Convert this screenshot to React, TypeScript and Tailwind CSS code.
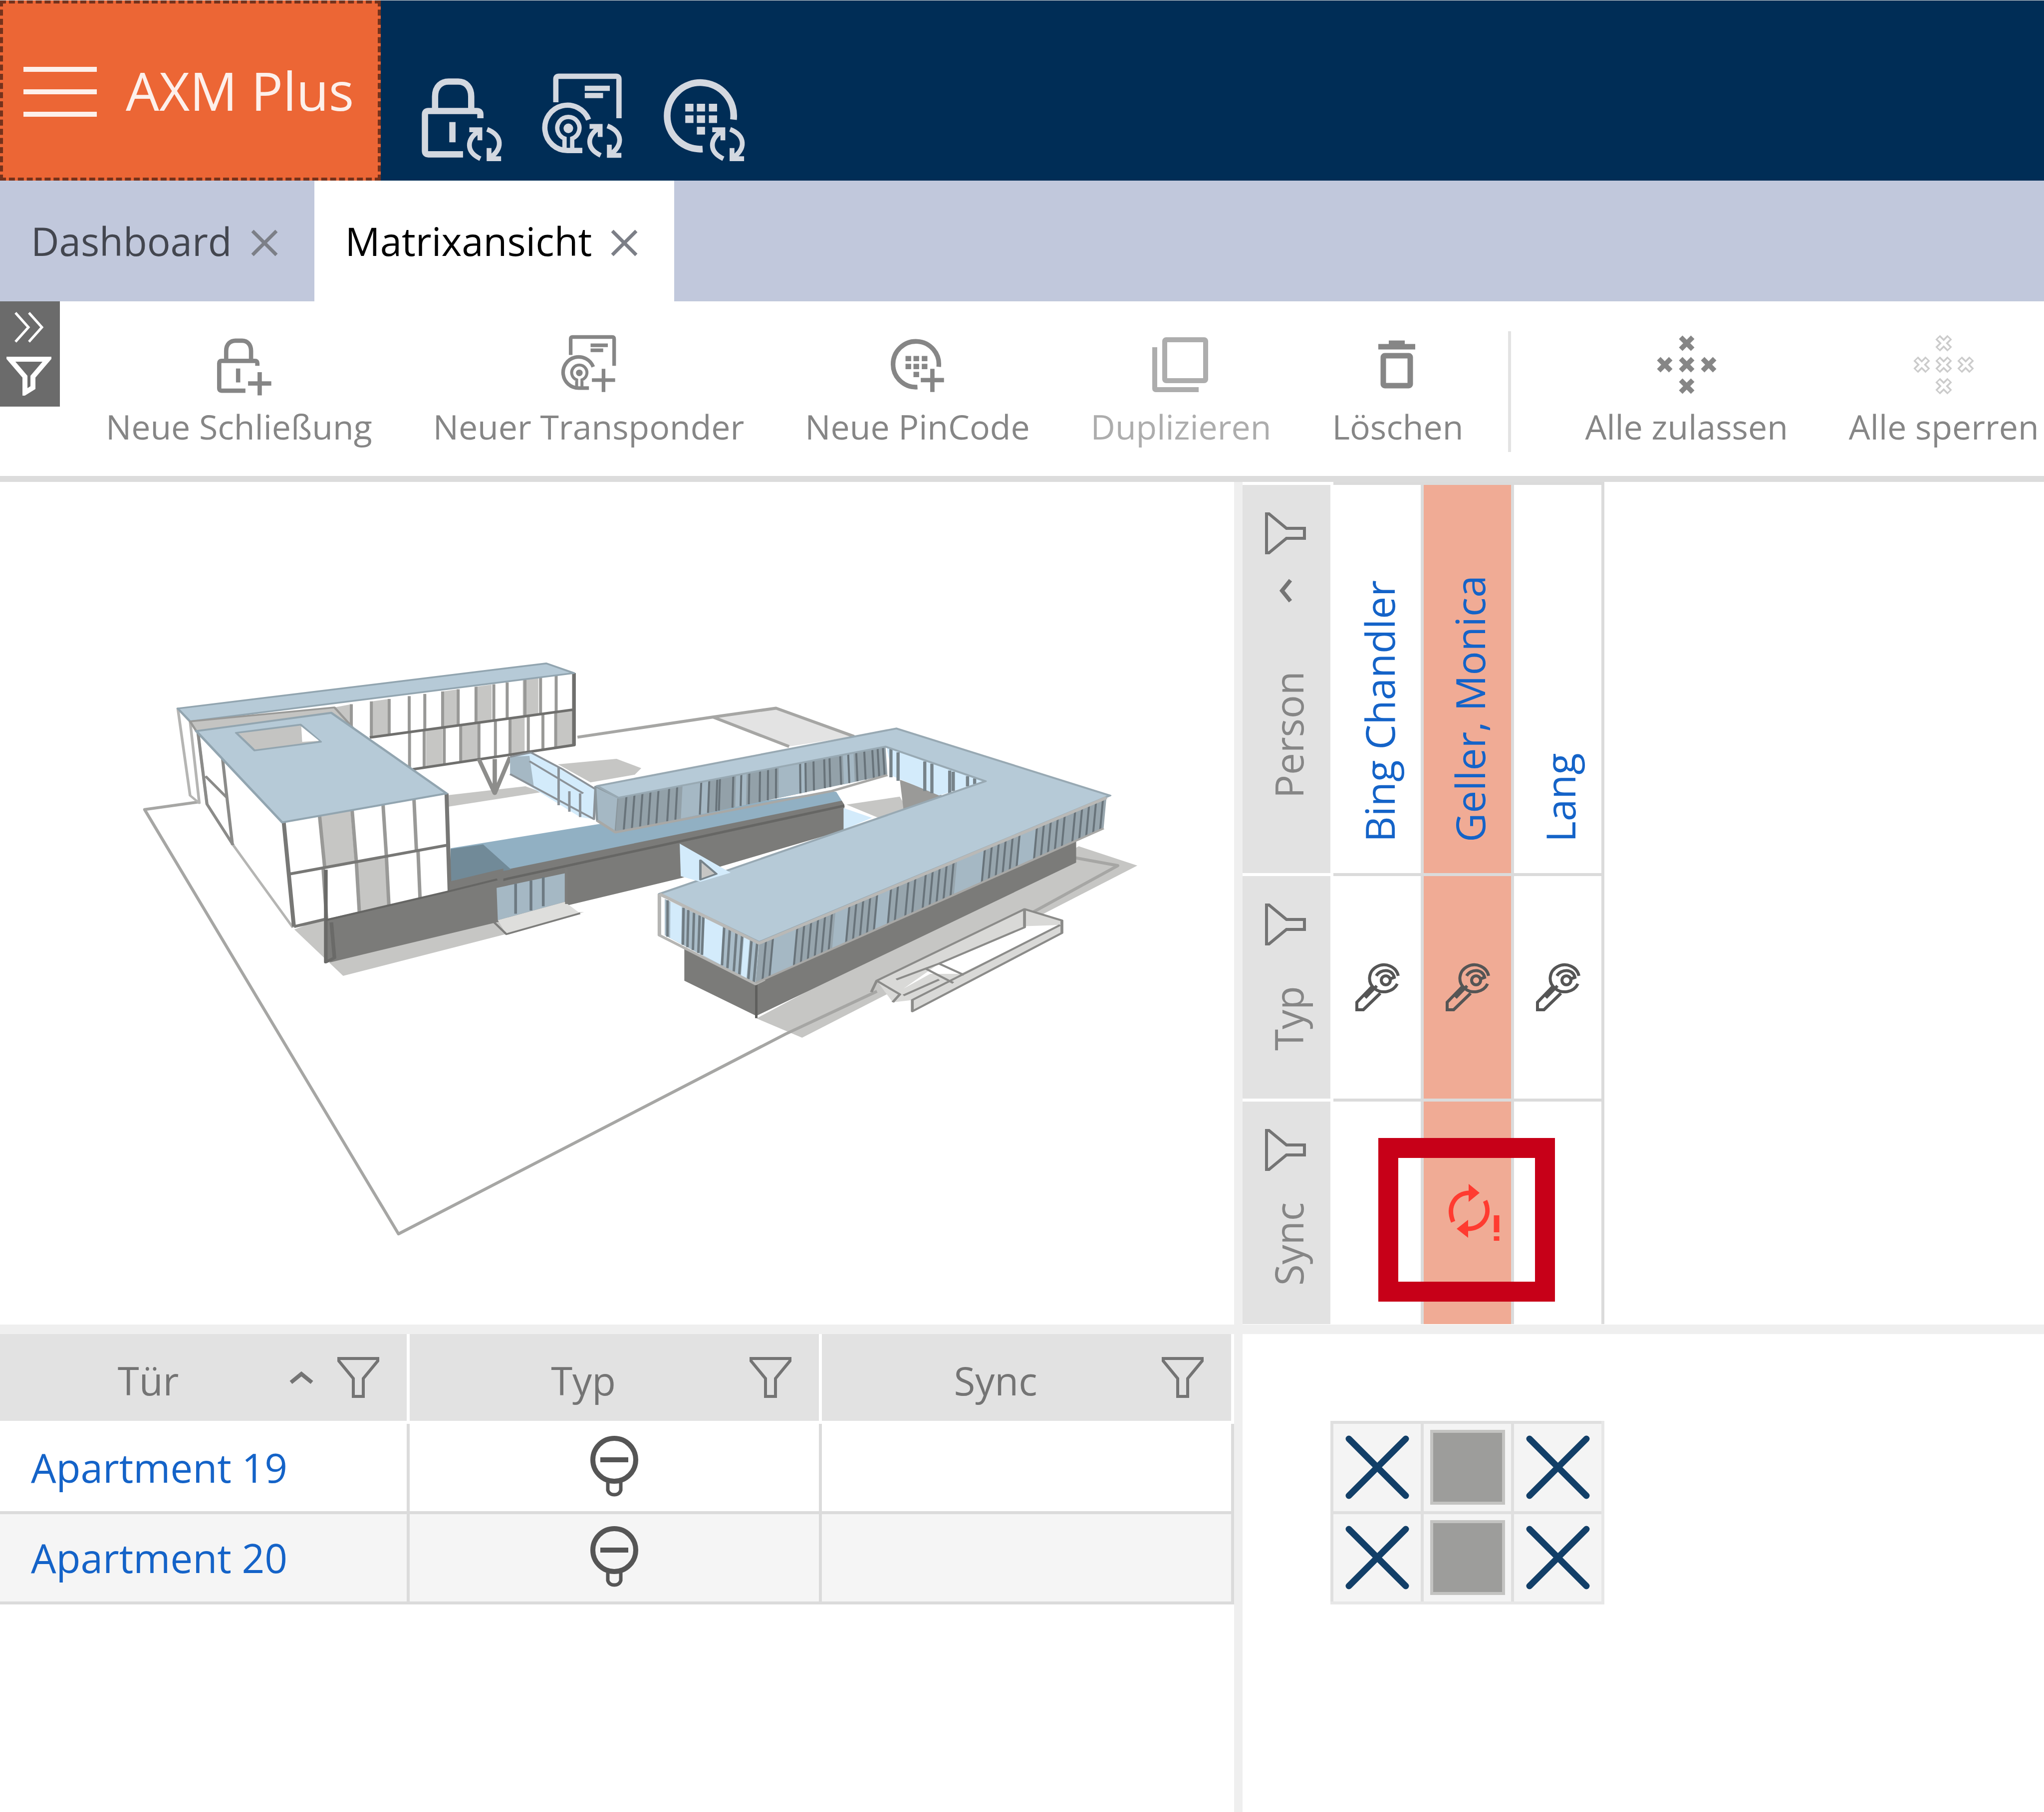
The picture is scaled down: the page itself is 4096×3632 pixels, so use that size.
import React, { useState } from 'react';
import clsx from 'clsx';

type IconProps = { className?: string };

const SmallSync: React.FC<{ transform?: string }> = ({ transform }) => (
    <g transform={transform} strokeWidth="10">
        <path d="M105 119h22v22M126 121c-28 18-28 44 2 58" />
        <path d="M142 118c32 12 34 42 4 60M146 157v22h25" />
    </g>
);

const SmallPlus: React.FC<{ transform?: string }> = ({ transform }) => (
    <path transform={transform} d="M98 138h70M133 104v70" />
);

const LockIcon: React.FC<IconProps & { badge: 'sync' | 'plus' }> = ({ className, badge }) => (
    <svg
        viewBox={badge === 'sync' ? '0 0 176 186' : '-16 0 176 186'}
        overflow="visible"
        fill="none"
        stroke="currentColor"
        strokeWidth="13"
        className={className}
    >
        <path d="M34 78V50C34 28 48 19 62 19h20c16 0 27 12 27 31v28" />
        <path d="M128 95v-8q0-7-7-7H20q-7 0-7 7v76q0 7 7 7h72" />
        <path d="M70 103v42" />
        {badge === 'sync' ? <SmallSync /> : <SmallPlus transform="translate(2 10)" />}
    </svg>
);

const TransponderIcon: React.FC<IconProps & { badge: 'sync' | 'plus' }> = ({ className, badge }) => (
    <svg viewBox="0 0 176 186" fill="none" stroke="currentColor" strokeWidth="11" className={className}>
        <path d="M34 62V14q0-6 6-6h119q6 0 6 6v81" />
        <path d="M94 33h52M94 48h38" />
        <path d="M102 98A47 47 0 1 0 58 162H89" />
        <path d="M52 158v-21a23 23 0 1 1 16 0v21" strokeWidth="9" />
        <circle cx="60" cy="116" r="10" fill="currentColor" stroke="none" />
        {badge === 'sync' ? <SmallSync transform="translate(-1 -7)" /> : <SmallPlus />}
    </svg>
);

const PinCodeIcon: React.FC<IconProps & { badge: 'sync' | 'plus' }> = ({ className, badge }) => (
    <svg viewBox="0 0 176 186" fill="none" stroke="currentColor" strokeWidth="14" className={className}>
        <path d="M152 98A69 69 0 1 0 88 159" />
        <path d="M52 73h17M76 73h17M101 73h17M52 97h17M76 97h17M101 97h17M76 121h17" strokeWidth="16" />
        {badge === 'sync' ? (
            <SmallSync transform="translate(3 0)" />
        ) : (
            <g strokeWidth="13">
                <SmallPlus />
            </g>
        )}
    </svg>
);

const DuplicateIcon: React.FC<IconProps> = ({ className }) => (
    <svg viewBox="0 0 117 124" fill="none" stroke="currentColor" strokeWidth="10" className={className}>
        <rect x="26" y="11" width="82" height="82" rx="3" />
        <path d="M6 26v83q0 2 2 2h86" />
    </svg>
);

const TrashIcon: React.FC<IconProps> = ({ className }) => (
    <svg viewBox="0 0 117 124" fill="none" stroke="currentColor" strokeWidth="11" className={className}>
        <path d="M20 25h74M41 18h32" />
        <rect x="30" y="43" width="54" height="60" rx="3" />
    </svg>
);

const CROSSES: [number, number][] = [
    [66, 18],
    [22, 61],
    [66, 61],
    [110, 61],
    [66, 104],
];

const CrossesIcon: React.FC<IconProps & { hollow?: boolean }> = ({ className, hollow }) => (
    <svg viewBox="0 0 132 124" fill="none" stroke="currentColor" className={className}>
        {CROSSES.map(([x, y]) => (
            <g key={`${x}-${y}`}>
                <path d={`M${x - 12} ${y - 12}l24 24M${x + 12} ${y - 12}l-24 24`} strokeWidth={hollow ? 13 : 10} />
                {hollow && (
                    <path
                        d={`M${x - 10} ${y - 10}l20 20M${x + 10} ${y - 10}l-20 20`}
                        stroke="#fff"
                        strokeWidth="6"
                    />
                )}
            </g>
        ))}
    </svg>
);

const FunnelIcon: React.FC<IconProps> = ({ className }) => (
    <svg viewBox="0 0 86 86" fill="none" stroke="currentColor" strokeWidth="6" className={className}>
        <path d="M4 5h78v5L53 45v36H33V45L4 10z" />
    </svg>
);

const CaretIcon: React.FC<IconProps> = ({ className }) => (
    <svg viewBox="0 0 52 28" fill="none" stroke="currentColor" strokeWidth="8" className={className}>
        <path d="M5 24L26 7l21 17" />
    </svg>
);

const CloseIcon: React.FC<IconProps> = ({ className }) => (
    <svg viewBox="0 0 60 60" fill="none" stroke="currentColor" strokeWidth="7" className={className}>
        <path d="M6 6l48 48M54 6L6 54" />
    </svg>
);

const KeyIcon: React.FC<IconProps> = ({ className }) => (
    <svg viewBox="0 0 96 98" fill="none" stroke="currentColor" strokeWidth="6" className={className}>
        <path d="M90 26A29 27 0 1 0 88 42" />
        <path d="M46 26C54 12 78 11 82 29l-8 3" />
        <circle cx="65" cy="35" r="9" />
        <path d="M38 47L7 79v15h13l34-33M47 46L24 70" />
    </svg>
);

const CylinderIcon: React.FC<IconProps> = ({ className }) => (
    <svg viewBox="0 0 98 128" fill="none" stroke="currentColor" strokeWidth="10" className={className}>
        <circle cx="49" cy="49" r="43" />
        <path d="M21 49h56" strokeWidth="10" />
        <path d="M36 90v20q3 9 13 9t13-9V90" strokeWidth="7" />
    </svg>
);

const SyncAlertIcon: React.FC<IconProps> = ({ className }) => (
    <svg viewBox="-24 0 128 120" fill="none" stroke="currentColor" strokeWidth="9" className={className}>
        <path d="M11 78C-2 46 16 20 44 20M75 36c14 30-6 56-34 56" />
        <path d="M42 2v36l22-18zM41 74v36L18 92z" fill="currentColor" stroke="none" />
        <path d="M98 65v34M98 107v9" strokeWidth="11" />
    </svg>
);

// points along an edge between two vertices
const lerp = (a: number, b: number, t: number) => a + (b - a) * t;

type FacadeProps = {
    top: [number, number, number, number];
    bottom: [number, number, number, number];
    panes?: [number, number][];
    bars?: number[];
    paneFill?: string;
    stroke?: string;
    width?: number;
};

// draws window panes and mullions on a skewed wall; positions run from 0 to 1 along the wall
const Facade: React.FC<FacadeProps> = ({ top, bottom, panes = [], bars = [], paneFill, stroke, width = 5 }) => {
    const p = (e: number[], t: number) => `${lerp(e[0], e[2], t)} ${lerp(e[1], e[3], t)}`;
    return (
        <>
            {panes.map(([a, b]) => (
                <path key={a} d={`M${p(top, a)}L${p(top, b)}L${p(bottom, b)}L${p(bottom, a)}z`} fill={paneFill} />
            ))}
            {bars.map((t) => (
                <path
                    key={t}
                    d={`M${p(top, t)}L${p(bottom, t)}`}
                    stroke={stroke}
                    strokeWidth={width}
                    vectorEffect="non-scaling-stroke"
                />
            ))}
        </>
    );
};

const wingBars = [
    0.03, 0.06, 0.09, 0.12, 0.15, 0.19, 0.22, 0.31, 0.34, 0.37, 0.38, 0.43, 0.46, 0.49, 0.53, 0.56, 0.59, 0.68, 0.7,
    0.73, 0.77, 0.79, 0.83, 0.86, 0.89, 0.92, 0.95, 0.97, 0.99,
];
const frontBars = [
    0.02, 0.04, 0.11, 0.13, 0.15, 0.17, 0.19, 0.21, 0.26, 0.28, 0.3, 0.32, 0.34, 0.38, 0.4, 0.43, 0.45, 0.48, 0.5,
    0.52, 0.54, 0.56, 0.65, 0.67, 0.69, 0.71, 0.73, 0.75, 0.8, 0.82, 0.84, 0.86, 0.88, 0.91, 0.93, 0.95, 0.97, 0.99,
];

const SitePlan: React.FC<IconProps> = ({ className }) => (
    <svg viewBox="0 1001 2563 1750" fill="none" strokeLinejoin="round" className={className}>
        <g transform="translate(280 1340) scale(1.352 .8036)">
            <path d="M320 855L245 735L300 700L560 700L690 690L575 745z" fill="#c6c6c4" />
            <path d="M480 418V388L600 365L625 380z" fill="#c6c6c4" />
            <path d="M650 308L740 294L778 318L768 335L700 355z" fill="#c6c6c4" />
            <path d="M955 965L1450 520L1540 570L1025 1015z" fill="#c6c6c4" />
            <path d="M888 186L985 163L1105 236L1005 262z" fill="#e3e3e3" />
            <g stroke="#a6a6a4" strokeWidth="6">
                <path
                    d="M100 405L15 425L405 1522L1000 1005L1140 895M1380 690L1510 570L1445 550"
                    vectorEffect="non-scaling-stroke"
                />
                <path d="M680 238L888 186L985 163L1105 236M888 186L1005 262" vectorEffect="non-scaling-stroke" />
            </g>
            {/* flat building between the two wings */}
            <path d="M295 700L485 608L1090 393V478L840 602L300 820z" fill="#7b7b79" />
            <path d="M485 525L740 455L1070 378L1092 382V400L485 610z" fill="#91b0c3" />
            <path d="M485 527L535 515L578 580L485 610z" fill="#718a98" />
            <path d="M485 640L575 603L1090 415" stroke="#666664" strokeWidth="5" vectorEffect="non-scaling-stroke" />
        </g>

        <g transform="translate(280 1340) scale(.6378 .4464)">
            <path d="M140 295L180 355L210 735L180 700z" fill="#fff" stroke="#b5b5b3" strokeWidth="9" />
            <path d="M650 290L1430 130V465L905 577z" fill="#fff" />
            <path d="M650 290L705 275V390z" fill="#c6c6c4" />
            <Facade
                top={[705, 275, 1430, 130]}
                bottom={[705, 440, 1430, 300]}
                paneFill="#c6c6c4"
                panes={[[0.09, 0.165], [0.41, 0.48], [0.56, 0.63], [0.77, 0.84]]}
                bars={[0, 0.09, 0.17, 0.26, 0.33, 0.41, 0.48, 0.56, 0.64, 0.7, 0.78, 0.85, 0.92]}
                stroke="#999997"
                width={6}
            />
            <Facade
                top={[835, 415, 1430, 300]}
                bottom={[835, 592, 1430, 465]}
                paneFill="#c6c6c4"
                panes={[[0.19, 0.28], [0.38, 0.48], [0.65, 0.73], [0.9, 1]]}
                bars={[0.1, 0.18, 0.29, 0.38, 0.48, 0.57, 0.65, 0.75, 0.83, 0.9]}
                stroke="#999997"
                width={6}
            />
            <path d="M765 430L1430 300M905 578L1430 465V130" stroke="#6f6f6d" strokeWidth="12" />
            <path d="M140 295L1340 85L1430 130L180 355z" fill="#b6cad7" stroke="#92a5b0" strokeWidth="8" />
            <path d="M180 355L650 290L720 400L200 400z" fill="#c4c4c2" stroke="#999997" strokeWidth="8" />
            <path d="M1120 530L1172 690L1222 520M1172 530V690" stroke="#8d8d8b" strokeWidth="14" />

            {/* glass bridge */}
            <path d="M1222 520L1290 500L1500 670L1495 810L1450 800L1222 600z" fill="#d3ebfb" />
            <path d="M1222 520L1285 515L1300 665L1222 600z" fill="#a5b8c4" />
            <path
                d="M1222 520L1290 500L1390 575L1500 670L1495 810L1222 600M1380 570V745M1415 680V775M1450 690V800M1285 540L1460 690"
                stroke="#8b9298"
                strokeWidth="8"
            />

            <path d="M200 400L480 825L518 1315L220 745z" fill="#fff" />
            <path d="M205 400L235 740L320 930L515 1315" stroke="#b5b5b3" strokeWidth="9" />
            <path
                d="M205 400L235 740L320 930M230 610L300 710M285 520L300 710L318 930"
                stroke="#8b8b89"
                strokeWidth="10"
            />
            <path d="M480 825L1015 690L1025 1145L518 1315z" fill="#fff" />
            <Facade
                top={[485, 825, 1015, 690]}
                bottom={[505, 1065, 1020, 930]}
                paneFill="#c6c6c4"
                panes={[[0.22, 0.41]]}
                bars={[0.22, 0.42, 0.61, 0.8]}
                stroke="#999997"
                width={7}
            />
            <Facade
                top={[505, 1065, 1020, 930]}
                bottom={[518, 1310, 1025, 1145]}
                paneFill="#c6c6c4"
                panes={[[0.42, 0.61]]}
                bars={[0.21, 0.42, 0.61, 0.81]}
                stroke="#999997"
                width={7}
            />
            <path
                d="M485 825L518 1310M505 1065L1020 930M1015 690L1025 1145M518 1310L622 1275"
                stroke="#777775"
                strokeWidth="13"
            />
            <path d="M622 1275L1025 1145V1100L1200 1040V1250L650 1455L625 1475z" fill="#7b7b79" />
            <path d="M622 1045V1475L650 1455L640 1290" stroke="#6a6a68" strokeWidth="12" />
            <path d="M622 1280L1025 1145L1180 1090" stroke="#666664" strokeWidth="9" />
            <path d="M200 400L640 315L1015 690L480 825z" fill="#b6cad7" stroke="#92a5b0" strokeWidth="9" />
            <path d="M330 408L540 370L605 450L390 490z" fill="#c4c4c2" stroke="#92a5b0" strokeWidth="8" />
            <path d="M542 378L600 445L545 450z" fill="#fff" />
            <path d="M1178 1130L1400 1062V1195L1182 1280z" fill="#a5b8c4" />
            <path d="M1240 1110V1250M1290 1095V1235M1330 1080V1215" stroke="#6d7a82" strokeWidth="9" />
            <path d="M1182 1280L1400 1195L1450 1248L1210 1345z" fill="#dededc" />
            <path d="M1170 1290L1210 1345L1450 1248M1405 1040V1205" stroke="#7d7d7b" strokeWidth="8" />
        </g>

        <g transform="translate(1240 1440) scale(.7398 .472)">
            <path d="M660 405L830 365L960 450L780 548L698 500z" fill="#fff" />
            <path d="M700 490L850 455L870 510L790 548z" fill="#c6c6c4" />
            <path d="M850 380L970 450L860 510z" fill="#9a9a98" />
            <path d="M692 505L772 548L692 600z" fill="#d3ebfb" />
            <path d="M-5 410L60 460L52 612L0 560z" fill="#a5b8c4" stroke="#8a969c" strokeWidth="6" />
            <path d="M60 460L810 235L815 360L52 612z" fill="#93a1a9" />
            <Facade
                top={[60, 460, 810, 235]}
                bottom={[52, 612, 815, 360]}
                paneFill="#a5b8c4"
                panes={[[0.24, 0.34], [0.6, 0.7], [0.44, 0.48], [0.84, 0.88]]}
                bars={wingBars}
                stroke="#68737a"
                width={4}
            />
            <path d="M0 560L52 612L660 430L815 360" stroke="#a8a8a6" strokeWidth="10" />
            <path d="M812 235L1090 385L960 450L830 365z" fill="#d3ebfb" />
            <path
                d="M825 245V370M845 260V385M920 300V430M940 310V440M990 340V445M1000 345V430M1040 365V410M1060 375V400"
                stroke="#77838a"
                strokeWidth="9"
            />
            <path
                d="M0 408L840 155L1440 450L455 1095L175 883L1090 387L810 235L60 460z"
                fill="#b6cad7"
                stroke="#98a9b3"
                strokeWidth="8"
            />

            {/* short end of the long wing */}
            <path d="M245 1120L445 1275L1345 640V745L447 1420L245 1265z" fill="#7b7b79" />
            <path d="M447 1275V1430" stroke="#5f5f5d" strokeWidth="7" />
            <path d="M190 905L455 1100L445 1280L190 1065z" fill="#a9bcc8" />
            <Facade
                top={[190, 905, 455, 1100]}
                bottom={[190, 1065, 445, 1275]}
                paneFill="#d3ebfb"
                panes={[[0.06, 0.18], [0.42, 0.62], [0.84, 0.9]]}
                bars={[0.03, 0.2, 0.25, 0.31, 0.37, 0.41, 0.63, 0.69, 0.76, 0.82, 0.92, 0.98]}
                stroke="#6f7b82"
                width={5}
            />
            <path d="M175 883V1065L445 1280L470 1260" stroke="#b5b5b3" strokeWidth="10" />
            <path d="M455 1100L1430 460L1422 595L445 1275z" fill="#97a5ad" />
            <Facade
                top={[455, 1100, 1430, 460]}
                bottom={[445, 1275, 1422, 595]}
                paneFill="#a5b8c4"
                panes={[[0.04, 0.11], [0.22, 0.26], [0.34, 0.38], [0.57, 0.65], [0.75, 0.8]]}
                bars={frontBars}
                stroke="#68737a"
                width={4}
            />
            <path d="M175 883L455 1100L1430 460" stroke="#b9b9b7" strokeWidth="12" />
            <path d="M445 1275L1422 595" stroke="#a8a8a6" strokeWidth="8" />

            <path d="M232 662L375 790L290 830L235 805z" fill="#d3ebfb" />
            <path d="M290 735L335 795L290 820z" fill="#c6c6c4" stroke="#77838a" strokeWidth="7" />

            {/* ramp beside the street */}
            <path d="M785 1265L1200 955L1305 1000V1055L885 1400V1350L830 1360z" fill="#d9d9d7" />
            <path d="M860 1300L935 1235L1020 1235L1300 1020L1200 1025L960 1190z" fill="#fff" />
            <path
                d="M770 1315L785 1265L1200 950L1305 1000V1055L885 1400V1350L1300 1020M785 1265L850 1325L830 1360M920 1210L1000 1275M960 1190L1030 1240M1200 950V1030L960 1190L840 1260M860 1330L960 1260"
                stroke="#8b8b89"
                strokeWidth="8"
            />
        </g>
    </svg>
);

type Tool = { label: string; icon: React.ReactNode; disabled?: boolean };

const toolIcon = 'h-[124px] w-[117px]';

const createTools: Tool[] = [
    { label: 'Neue Schließung', icon: <LockIcon badge="plus" className={toolIcon} /> },
    { label: 'Neuer Transponder', icon: <TransponderIcon badge="plus" className={toolIcon} /> },
    { label: 'Neue PinCode', icon: <PinCodeIcon badge="plus" className={toolIcon} /> },
    { label: 'Duplizieren', icon: <DuplicateIcon className={toolIcon} />, disabled: true },
    { label: 'Löschen', icon: <TrashIcon className={toolIcon} /> },
];

const accessTools: Tool[] = [
    { label: 'Alle zulassen', icon: <CrossesIcon className="h-[124px] w-[132px]" /> },
    { label: 'Alle sperren', icon: <CrossesIcon hollow className="h-[124px] w-[132px] text-[#cbcbcb]" /> },
];

const ToolButton: React.FC<{ tool: Tool }> = ({ tool }) => (
    <button
        disabled={tool.disabled}
        className={clsx(
            'flex shrink-0 flex-col items-center gap-[16px] text-[68px] leading-[90px] whitespace-nowrap',
            tool.disabled ? 'text-[#adadad]' : 'text-[#868686]',
        )}
    >
        {tool.icon}
        {tool.label}
    </button>
);

const persons = [
    { name: 'Bing Chandler', pending: false },
    { name: 'Geller, Monica', pending: true },
    { name: 'Lang', pending: false },
];

const doors = ['Apartment 19', 'Apartment 20'];

const SideHeader: React.FC<{ label: string; sorted?: boolean; last?: boolean; className: string }> = ({
    label,
    sorted,
    last,
    className,
}) => (
    <th
        scope="row"
        className={clsx(
            'border-r-[6px] border-white bg-[#e2e2e2] bg-clip-padding p-0 font-normal',
            sorted && 'border-t-[6px]',
            !last && 'border-b-[6px]',
        )}
    >
        <div className={clsx('flex w-[176px] flex-col items-center pt-[54px] pr-1 text-[#747474]', className)}>
            <button aria-label={`${label} filtern`} className="h-[86px] w-[86px] shrink-0">
                <FunnelIcon className="h-[86px] w-[86px] -rotate-90" />
            </button>
            {sorted && <CaretIcon className="mt-[58px] mb-[14px] h-[28px] w-[52px] shrink-0 -rotate-90" />}
            <span className="flex flex-1 rotate-180 items-center justify-center pt-4 pr-3 text-[78px] leading-[104px] text-[#868686] [writing-mode:vertical-rl]">
                {label}
            </span>
        </div>
    </th>
);

const TableHeader: React.FC<{ label: string; sorted?: boolean }> = ({ label, sorted }) => (
    <th
        scope="col"
        className={clsx(
            'border-r-[6px] border-b-[6px] border-white bg-[#e2e2e2] bg-clip-padding p-0 font-normal',
            sorted && 'w-[33.2%]',
        )}
    >
        <div className="flex h-[174px] items-center pr-[54px] text-[#747474]">
            <span className="flex-1 pt-3 pl-4 text-center text-[78px] leading-[104px]">{label}</span>
            {sorted && <CaretIcon className="mr-[45px] h-[28px] w-[52px]" />}
            <button aria-label={`${label} filtern`}>
                <FunnelIcon className="h-[86px] w-[86px]" />
            </button>
        </div>
    </th>
);

const PersonTable: React.FC = () => {
    const cell = (pending: boolean) =>
        clsx('relative border-r-[6px] border-[#dbdbdb] bg-clip-padding p-0', pending ? 'bg-[#f0ab95]' : 'bg-white');

    return (
        <table className="border-separate border-spacing-0">
            <tbody>
                <tr>
                    <SideHeader label="Person" sorted className="h-[778px]" />
                    {persons.map((p) => (
                        <td key={p.name} className={clsx(cell(p.pending), 'border-t-[6px] border-b-[6px]')}>
                            <div className="flex h-[778px] w-[175px] items-center justify-center">
                                <a
                                    href="#person"
                                    className="h-full rotate-180 pt-[62px] pr-2 text-[80px] leading-[120px] whitespace-nowrap text-[#1463c8] [writing-mode:vertical-rl]"
                                >
                                    {p.name}
                                </a>
                            </div>
                        </td>
                    ))}
                </tr>
                <tr>
                    <SideHeader label="Typ" className="h-[446px]" />
                    {persons.map((p) => (
                        <td key={p.name} className={clsx(cell(p.pending), 'border-b-[6px]')}>
                            <KeyIcon className="mx-auto h-[98px] w-[96px] text-[#555]" />
                        </td>
                    ))}
                </tr>
                <tr>
                    <SideHeader label="Sync" last className="h-[446px]" />
                    {persons.map((p) => (
                        <td key={p.name} className={cell(p.pending)}>
                            {p.pending && (
                                <>
                                    <SyncAlertIcon className="mx-auto h-[120px] w-[128px] text-[#ff3b30]" />
                                    <span className="pointer-events-none absolute top-[73px] -left-[91px] z-10 h-[328px] w-[354px] border-[40px] border-[#c70018]" />
                                </>
                            )}
                        </td>
                    ))}
                </tr>
            </tbody>
        </table>
    );
};

const DoorTable: React.FC = () => (
    <table className="w-full table-fixed border-separate border-spacing-0">
        <thead>
            <tr>
                <TableHeader label="Tür" sorted />
                <TableHeader label="Typ" />
                <TableHeader label="Sync" />
            </tr>
        </thead>
        <tbody className="[&_td]:h-[181px] [&_td]:border-r-[6px] [&_td]:border-b-[6px] [&_td]:border-[#dbdbdb] [&_td]:p-0">
            {doors.map((door) => (
                <tr key={door} className="even:bg-[#f5f5f5]">
                    <td>
                        <a href="#door" className="pl-[62px] text-[80px] leading-[104px] text-[#1463c8]">
                            {door}
                        </a>
                    </td>
                    <td>
                        <CylinderIcon className="mx-auto h-[128px] w-[98px] text-[#555]" />
                    </td>
                    <td />
                </tr>
            ))}
        </tbody>
    </table>
);

const AccessMatrix: React.FC = () => {
    const [granted, setGranted] = useState<Record<string, boolean>>(() =>
        Object.fromEntries(doors.flatMap((d) => persons.map((p) => [`${d}/${p.name}`, !p.pending]))),
    );

    return (
        <table className="mt-[174px] ml-[176px] border-separate border-spacing-0 border-r-[6px] border-b-[6px] border-[#e7e7e7]">
            <tbody>
                {doors.map((door) => (
                    <tr key={door}>
                        {persons.map((p) => {
                            const key = `${door}/${p.name}`;
                            return (
                                <td key={key} className="border-t-[6px] border-l-[6px] border-[#dfdfdf] bg-[#f4f4f4] p-0">
                                    <button
                                        aria-label={`${door}, ${p.name}`}
                                        onClick={() => setGranted({ ...granted, [key]: !granted[key] })}
                                        className="flex h-[175px] w-[175px] items-center justify-center"
                                    >
                                        {granted[key] ? (
                                            <svg
                                                viewBox="0 0 128 128"
                                                stroke="#123f68"
                                                strokeWidth="13"
                                                strokeLinecap="round"
                                                className="h-[128px] w-[128px]"
                                            >
                                                <path d="M7 7l114 114M121 7L7 121" />
                                            </svg>
                                        ) : (
                                            <span className="h-[150px] w-[150px] border-[6px] border-[#c3c3c1] bg-[#9d9d9b]" />
                                        )}
                                    </button>
                                </td>
                            );
                        })}
                    </tr>
                ))}
            </tbody>
        </table>
    );
};

const App: React.FC = () => {
    const [activeTab, setActiveTab] = useState('Matrixansicht');

    return (
        <div className="flex min-h-screen flex-col overflow-hidden bg-white font-['Open_Sans','Noto_Sans',sans-serif]">
            <header className="flex h-[362px] border-t border-[#dcdcdc] bg-[#002d56]">
                <button className="flex items-center gap-[58px] border-[6px] border-dashed border-[#74321c] bg-[#ec6635] bg-clip-border pr-[48px] pl-[41px] text-[106px] text-[#fdf0eb]">
                    <span className="mt-1 flex w-[147px] flex-col gap-[35px]">
                        <span className="h-[10px] bg-current" />
                        <span className="h-[10px] bg-current" />
                        <span className="h-[10px] bg-current" />
                    </span>
                    AXM Plus
                </button>
                <div className="flex items-start gap-[72px] pt-[144px] pl-[76px] text-[#d3d8e0]">
                    <button aria-label="Schließung synchronisieren">
                        <LockIcon badge="sync" className="h-[180px] w-[170px]" />
                    </button>
                    <button aria-label="Transponder synchronisieren">
                        <TransponderIcon badge="sync" className="h-[180px] w-[170px]" />
                    </button>
                    <button aria-label="PinCode synchronisieren">
                        <PinCodeIcon badge="sync" className="h-[180px] w-[170px]" />
                    </button>
                </div>
            </header>

            <nav className="flex h-[242px] bg-[#c1c8dc]">
                {['Dashboard', 'Matrixansicht'].map((tab) => (
                    <div
                        key={tab}
                        className={clsx(
                            'flex items-center gap-[35px] pr-[70px] pl-[62px] text-[78px] leading-[104px]',
                            tab === activeTab ? 'bg-white text-black' : 'text-[#43464f]',
                        )}
                    >
                        <button onClick={() => setActiveTab(tab)}>{tab}</button>
                        <button aria-label={`${tab} schließen`} className="text-[#7c7f87]">
                            <CloseIcon className="mt-2 h-[60px] w-[60px]" />
                        </button>
                    </div>
                ))}
            </nav>

            <div className="flex h-[362px] items-start border-b-[12px] border-[#dcdcdc] bg-white">
                <button
                    aria-label="Filter einblenden"
                    className="flex h-[211px] w-[120px] shrink-0 flex-col items-center gap-[24px] bg-[#6b6b6b] pt-[19px] pr-1 text-white"
                >
                    <svg viewBox="0 0 66 66" fill="none" stroke="currentColor" strokeWidth="5" className="h-[66px] w-[66px]">
                        <path d="M6 4l26 29L6 62M33 4l26 29-26 29" />
                    </svg>
                    <svg viewBox="0 0 90 80" fill="none" stroke="currentColor" strokeWidth="10" className="h-[80px] w-[90px]">
                        <path d="M7 7h76L53 42v22L37 74V42z" />
                    </svg>
                </button>
                <div className="flex gap-[122px] pt-[66px] pl-[92px]">
                    {createTools.map((tool) => (
                        <ToolButton key={tool.label} tool={tool} />
                    ))}
                </div>
                <div className="mt-[60px] ml-[90px] h-[242px] w-[6px] shrink-0 bg-[#e3e3e3]" />
                <div className="flex gap-[122px] pt-[66px] pl-[148px]">
                    {accessTools.map((tool) => (
                        <ToolButton key={tool.label} tool={tool} />
                    ))}
                </div>
            </div>

            <main className="grid flex-1 grid-cols-[2473fr_17px_1606fr] grid-rows-[auto_19px_1fr]">
                <section>
                    <SitePlan className="w-full" />
                </section>
                <div className="row-span-3 bg-[#efefef]" />
                <section>
                    <PersonTable />
                </section>
                <div className="bg-[#efefef]" />
                <div className="bg-[#efefef]" />
                <section>
                    <DoorTable />
                </section>
                <section>
                    <AccessMatrix />
                </section>
            </main>
        </div>
    );
};

export default App;
